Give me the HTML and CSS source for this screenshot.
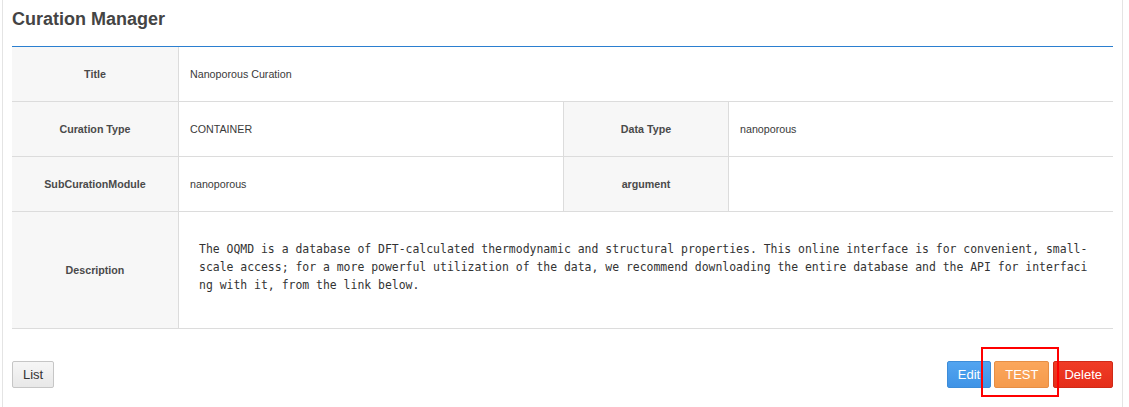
FILE: index.html
```html
<!DOCTYPE html>
<html lang="en">
<head>
<meta charset="utf-8">
<title>Curation Manager</title>
<link rel="stylesheet" href="styles.css">
</head>
<body>
<div class="panel">
  <h1 class="panel-title">Curation Manager</h1>
  <div class="detail">
    <div class="cell label">Title</div>
    <div class="cell value span3">Nanoporous Curation</div>

    <div class="cell label">Curation Type</div>
    <div class="cell value">CONTAINER</div>
    <div class="cell label">Data Type</div>
    <div class="cell value last">nanoporous</div>

    <div class="cell label">SubCurationModule</div>
    <div class="cell value">nanoporous</div>
    <div class="cell label">argument</div>
    <div class="cell value last"></div>

    <div class="cell label">Description</div>
    <div class="cell value span3 desc"><pre class="desc-text">The OQMD is a database of DFT-calculated thermodynamic and structural properties. This online interface is for convenient, small-
scale access; for a more powerful utilization of the data, we recommend downloading the entire database and the API for interfaci
ng with it, from the link below.</pre></div>
  </div>
  <div class="actions">
    <button class="btn btn-default">List</button>
    <div class="action-group">
      <button class="btn btn-edit">Edit</button>
      <span class="marked">
        <button class="btn btn-test">TEST</button>
        <span class="highlight"></span>
      </span>
      <button class="btn btn-delete">Delete</button>
    </div>
  </div>
</div>
</body>
</html>
```

FILE: styles.css
```css
* { box-sizing: border-box; }

html, body {
  margin: 0;
  padding: 0;
  background: #fff;
}

body {
  font-family: "Liberation Sans", Arial, sans-serif;
  color: #333;
}

.panel {
  margin-left: 2px;
  width: 1121px;
  min-height: 100vh;
  border-left: 1px solid #e4e4e4;
  border-right: 1px solid #e4e4e4;
  padding: 9px 9px 0;
}

.panel-title {
  margin: 0 0 17px;
  font-size: 18px;
  line-height: 20px;
  font-weight: bold;
  color: #444;
}

.detail {
  display: grid;
  grid-template-columns: 167px 385px 165px 384px;
  grid-template-rows: 55px 55px 55px 117px;
  border-top: 1px solid #2b7fd0;
}

.cell {
  border-bottom: 1px solid #dcdcdc;
  border-right: 1px solid #dcdcdc;
  font-size: 10.7px;
  display: flex;
  align-items: center;
}

.cell.last,
.cell.span3 {
  border-right: none;
}

.span3 {
  grid-column: span 3;
}

.label {
  background: #f7f7f7;
  justify-content: center;
  font-weight: bold;
  color: #4a4a4a;
}

.value {
  padding-left: 11px;
  color: #3a3a3a;
}

.desc {
  align-items: flex-start;
  padding: 28px 0 0 20px;
}

.desc-text {
  margin: 0;
  font-family: "DejaVu Sans Mono", "Liberation Mono", monospace;
  font-size: 11.45px;
  line-height: 18px;
  color: #333;
  white-space: pre;
}

.actions {
  display: flex;
  justify-content: space-between;
  align-items: center;
  margin-top: 32px;
}

.action-group {
  display: flex;
  align-items: center;
  gap: 3px;
}

.btn {
  height: 27px;
  padding: 0 10px;
  font-family: "Liberation Sans", Arial, sans-serif;
  font-size: 13px;
  border: 1px solid;
  border-radius: 2px;
  color: #fff;
  cursor: pointer;
}

.btn-default {
  background: linear-gradient(#f6f6f6, #e8e8e8);
  border-color: #c6c6c6;
  color: #333;
}

.btn-edit {
  background: linear-gradient(#52a4f0, #3f93e6);
  border-color: #3d8cd8;
}

.btn-test {
  background: linear-gradient(#fba75c, #f59a4c);
  border-color: #e68e45;
}

.btn-delete {
  background: linear-gradient(#f03c26, #e42e1a);
  border-color: #cf2a18;
  margin-left: 1px;
}

.marked {
  position: relative;
  display: inline-flex;
}

.highlight {
  position: absolute;
  left: -13px;
  top: -14px;
  width: 78px;
  height: 50px;
  border: 2px solid #f00;
  pointer-events: none;
}
```
